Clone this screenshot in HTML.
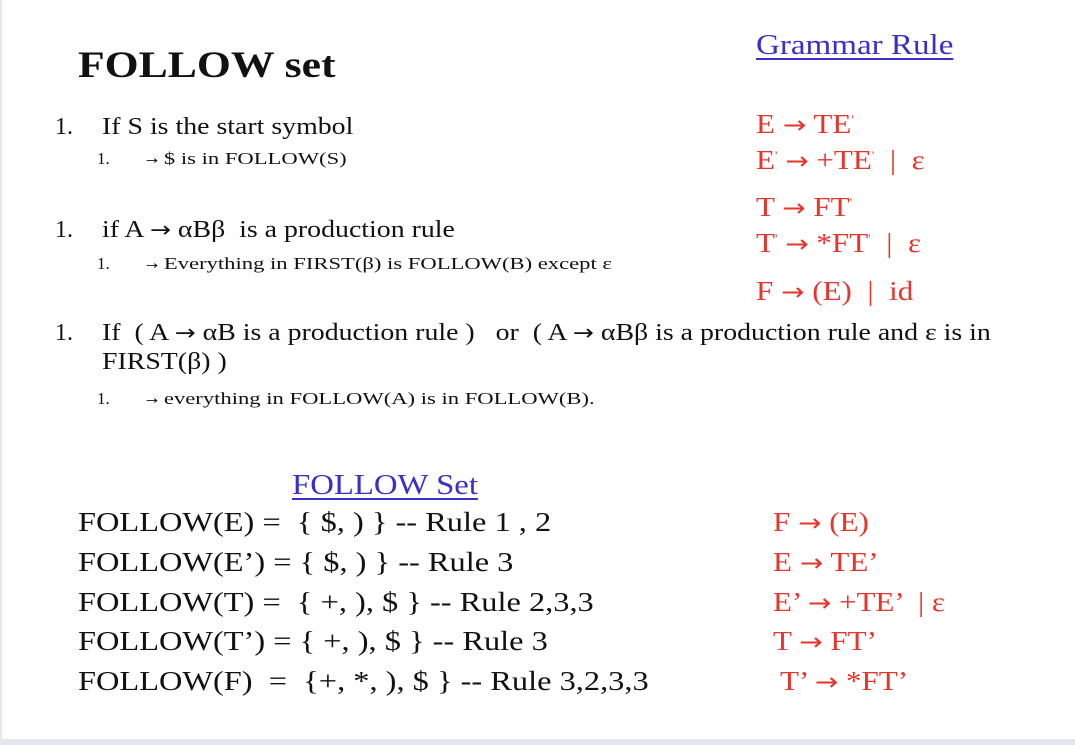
<!DOCTYPE html>
<html><head><meta charset="utf-8"><style>
body{margin:0;width:1075px;height:745px;background:#fff;position:relative;overflow:hidden;font-family:"Liberation Serif",serif;color:#111}
.a{position:absolute;white-space:nowrap;line-height:1;transform-origin:0 0;transform:scaleX(1.15)}
.r{color:#e8352c;font-size:27px}
.b{color:#3a2fc8;text-decoration:underline;text-decoration-thickness:2px;text-underline-offset:4px}
.m{font-size:24px;transform:scaleX(1.16)}
.s{font-size:17px;transform:scaleX(1.33)}
.f{font-size:27px;transform:scaleX(1.2)}
.ar{font-family:"DejaVu Sans",sans-serif;font-size:0.9em;line-height:0.8}
.sa{font-family:"DejaVu Sans",sans-serif;font-size:11px}
sup{font-size:12px;line-height:0}
</style></head><body>
<div style="position:absolute;left:0;top:0;width:2px;height:745px;background:#e4e8f0"></div>
<div style="position:absolute;left:0;top:739px;width:1075px;height:6px;background:#e2e6ee"></div>
<div class="a" style="left:78px;top:47px;font-size:37px;font-weight:bold;transform:scaleX(1.18)">FOLLOW set</div>
<div class="a b" style="left:756px;top:31px;font-size:29px;transform:scaleX(1.14)">Grammar Rule</div>

<div class="a m" style="left:55px;top:115px;transform:none">1.</div>
<div class="a m" style="left:102px;top:115px">If S is the start symbol</div>
<div class="a s" style="left:97px;top:150px;transform:none">1.</div>
<div class="a s" style="left:146px;top:150px"><span class="sa">→</span> $ is in FOLLOW(S)</div>

<div class="a m" style="left:55px;top:218px;transform:none">1.</div>
<div class="a m" style="left:102px;top:218px">if A <span class="ar">→</span> αBβ &nbsp;is a production rule</div>
<div class="a s" style="left:97px;top:255px;transform:none">1.</div>
<div class="a s" style="left:146px;top:255px"><span class="sa">→</span> Everything in FIRST(β) is FOLLOW(B) except ε</div>

<div class="a m" style="left:55px;top:321px;transform:none">1.</div>
<div class="a m" style="left:102px;top:321px">If &nbsp;( A <span class="ar">→</span> αB is a production rule ) &nbsp;&nbsp;or &nbsp;( A <span class="ar">→</span> αBβ is a production rule and ε is in</div>
<div class="a m" style="left:102px;top:350px">FIRST(β) )</div>
<div class="a s" style="left:97px;top:390px;transform:none">1.</div>
<div class="a s" style="left:146px;top:390px"><span class="sa">→</span> everything in FOLLOW(A) is in FOLLOW(B).</div>

<div class="a r" style="left:756px;top:111px">E <span class="ar">→</span> TE<sup>'</sup></div>
<div class="a r" style="left:756px;top:147px">E<sup>'</sup> <span class="ar">→</span> +TE<sup>'</sup> &nbsp;| &nbsp;ε</div>
<div class="a r" style="left:756px;top:194px">T <span class="ar">→</span> FT<sup>'</sup></div>
<div class="a r" style="left:756px;top:230px">T<sup>'</sup> <span class="ar">→</span> *FT<sup>'</sup> &nbsp;| &nbsp;ε</div>
<div class="a r" style="left:756px;top:278px">F <span class="ar">→</span> (E) &nbsp;| &nbsp;id</div>

<div class="a b" style="left:292px;top:472px;font-size:28px;transform:scaleX(1.17)">FOLLOW Set</div>
<div class="a f" style="left:78px;top:509px">FOLLOW(E) = &nbsp;{ $, ) } -- Rule 1 , 2</div>
<div class="a f" style="left:78px;top:549px">FOLLOW(E’) = { $, ) } -- Rule 3</div>
<div class="a f" style="left:78px;top:589px">FOLLOW(T) = &nbsp;{ +, ), $ } -- Rule 2,3,3</div>
<div class="a f" style="left:78px;top:628px">FOLLOW(T’) = { +, ), $ } -- Rule 3</div>
<div class="a f" style="left:78px;top:668px">FOLLOW(F) &nbsp;= &nbsp;{+, *, ), $ } -- Rule 3,2,3,3</div>

<div class="a r" style="left:773px;top:509px">F <span class="ar">→</span> (E)</div>
<div class="a r" style="left:773px;top:549px">E <span class="ar">→</span> TE’</div>
<div class="a r" style="left:773px;top:589px">E’ <span class="ar">→</span> +TE’ &nbsp;| ε</div>
<div class="a r" style="left:773px;top:628px">T <span class="ar">→</span> FT’</div>
<div class="a r" style="left:780px;top:668px">T’ <span class="ar">→</span> *FT’</div>
</body></html>
